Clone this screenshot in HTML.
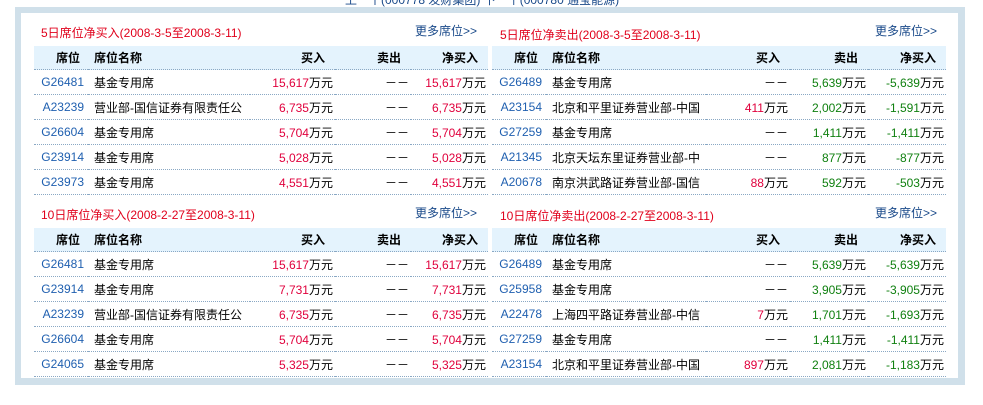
<!DOCTYPE html>
<html><head><meta charset="utf-8"><style>
body{margin:0;width:983px;height:405px;background:#fff;position:relative;overflow:hidden;font-family:"Liberation Sans","Noto Sans CJK SC",sans-serif;font-size:12px;color:#000}
.top{position:absolute;left:345px;top:-9px;color:#1a4a8a;font-size:12px;white-space:nowrap}
.outer{position:absolute;left:15px;top:7px;width:950px;height:378px;background:#d0e0ea}
.inner{position:absolute;left:21px;top:13px;width:937px;height:365px;background:#fff}
.ttl{position:absolute;color:#e0001b;white-space:nowrap}
.more{position:absolute;color:#1a4a8a;white-space:nowrap}
table{position:absolute;border-collapse:collapse;width:454px}
th{background:#e4f3fd;font-weight:bold;height:23px;border-bottom:1px dotted #8aa8c4;padding:0}
td{height:24px;border-bottom:1px dotted #8aa8c4;padding:0;white-space:nowrap}
.c1{text-align:right;padding-right:4px}
th.c1{padding-right:8px}
td.c1{color:#2060b0}
.c2{text-align:left;padding-left:6px}
.r{text-align:right;padding-right:2px}
th.r{padding-right:10px}
.red{color:#e0003c}.g{color:#108010}
</style></head><body>
<div class="top">上一个(000778 发财集团) 下一个(000780 通宝能源)</div>
<div class="outer"></div><div class="inner"></div>

<div class="ttl" style="left:41px;top:24px">5日席位净买入(2008-3-5至2008-3-11)</div>
<div class="more" style="left:415px;top:22px">更多席位&gt;&gt;</div>
<table style="left:34px;top:46px">
<colgroup><col style="width:54px"><col style="width:162px"><col style="width:85px"><col style="width:76px"><col style="width:77px"></colgroup>
<tr><th class="c1">席位</th><th class="c2">席位名称</th><th class="r">买入</th><th class="r">卖出</th><th class="r">净买入</th></tr>
<tr><td class="c1">G26481</td><td class="c2">基金专用席</td><td class="r"><span class="red">15,617</span>万元</td><td class="r">－－</td><td class="r"><span class="red">15,617</span>万元</td></tr>
<tr><td class="c1">A23239</td><td class="c2">营业部-国信证券有限责任公</td><td class="r"><span class="red">6,735</span>万元</td><td class="r">－－</td><td class="r"><span class="red">6,735</span>万元</td></tr>
<tr><td class="c1">G26604</td><td class="c2">基金专用席</td><td class="r"><span class="red">5,704</span>万元</td><td class="r">－－</td><td class="r"><span class="red">5,704</span>万元</td></tr>
<tr><td class="c1">G23914</td><td class="c2">基金专用席</td><td class="r"><span class="red">5,028</span>万元</td><td class="r">－－</td><td class="r"><span class="red">5,028</span>万元</td></tr>
<tr><td class="c1">G23973</td><td class="c2">基金专用席</td><td class="r"><span class="red">4,551</span>万元</td><td class="r">－－</td><td class="r"><span class="red">4,551</span>万元</td></tr>
</table>

<div class="ttl" style="left:500px;top:26px">5日席位净卖出(2008-3-5至2008-3-11)</div>
<div class="more" style="left:875px;top:22px">更多席位&gt;&gt;</div>
<table style="left:492px;top:46px">
<colgroup><col style="width:54px"><col style="width:160px"><col style="width:84px"><col style="width:78px"><col style="width:78px"></colgroup>
<tr><th class="c1">席位</th><th class="c2">席位名称</th><th class="r">买入</th><th class="r">卖出</th><th class="r">净买入</th></tr>
<tr><td class="c1">G26489</td><td class="c2">基金专用席</td><td class="r">－－</td><td class="r"><span class="g">5,639</span>万元</td><td class="r"><span class="g">-5,639</span>万元</td></tr>
<tr><td class="c1">A23154</td><td class="c2">北京和平里证券营业部-中国</td><td class="r"><span class="red">411</span>万元</td><td class="r"><span class="g">2,002</span>万元</td><td class="r"><span class="g">-1,591</span>万元</td></tr>
<tr><td class="c1">G27259</td><td class="c2">基金专用席</td><td class="r">－－</td><td class="r"><span class="g">1,411</span>万元</td><td class="r"><span class="g">-1,411</span>万元</td></tr>
<tr><td class="c1">A21345</td><td class="c2">北京天坛东里证券营业部-中</td><td class="r">－－</td><td class="r"><span class="g">877</span>万元</td><td class="r"><span class="g">-877</span>万元</td></tr>
<tr><td class="c1">A20678</td><td class="c2">南京洪武路证券营业部-国信</td><td class="r"><span class="red">88</span>万元</td><td class="r"><span class="g">592</span>万元</td><td class="r"><span class="g">-503</span>万元</td></tr>
</table>

<div class="ttl" style="left:41px;top:206px">10日席位净买入(2008-2-27至2008-3-11)</div>
<div class="more" style="left:415px;top:204px">更多席位&gt;&gt;</div>
<table style="left:34px;top:228px">
<colgroup><col style="width:54px"><col style="width:162px"><col style="width:85px"><col style="width:76px"><col style="width:77px"></colgroup>
<tr><th class="c1">席位</th><th class="c2">席位名称</th><th class="r">买入</th><th class="r">卖出</th><th class="r">净买入</th></tr>
<tr><td class="c1">G26481</td><td class="c2">基金专用席</td><td class="r"><span class="red">15,617</span>万元</td><td class="r">－－</td><td class="r"><span class="red">15,617</span>万元</td></tr>
<tr><td class="c1">G23914</td><td class="c2">基金专用席</td><td class="r"><span class="red">7,731</span>万元</td><td class="r">－－</td><td class="r"><span class="red">7,731</span>万元</td></tr>
<tr><td class="c1">A23239</td><td class="c2">营业部-国信证券有限责任公</td><td class="r"><span class="red">6,735</span>万元</td><td class="r">－－</td><td class="r"><span class="red">6,735</span>万元</td></tr>
<tr><td class="c1">G26604</td><td class="c2">基金专用席</td><td class="r"><span class="red">5,704</span>万元</td><td class="r">－－</td><td class="r"><span class="red">5,704</span>万元</td></tr>
<tr><td class="c1">G24065</td><td class="c2">基金专用席</td><td class="r"><span class="red">5,325</span>万元</td><td class="r">－－</td><td class="r"><span class="red">5,325</span>万元</td></tr>
</table>

<div class="ttl" style="left:500px;top:207px">10日席位净卖出(2008-2-27至2008-3-11)</div>
<div class="more" style="left:875px;top:204px">更多席位&gt;&gt;</div>
<table style="left:492px;top:228px">
<colgroup><col style="width:54px"><col style="width:160px"><col style="width:84px"><col style="width:78px"><col style="width:78px"></colgroup>
<tr><th class="c1">席位</th><th class="c2">席位名称</th><th class="r">买入</th><th class="r">卖出</th><th class="r">净买入</th></tr>
<tr><td class="c1">G26489</td><td class="c2">基金专用席</td><td class="r">－－</td><td class="r"><span class="g">5,639</span>万元</td><td class="r"><span class="g">-5,639</span>万元</td></tr>
<tr><td class="c1">G25958</td><td class="c2">基金专用席</td><td class="r">－－</td><td class="r"><span class="g">3,905</span>万元</td><td class="r"><span class="g">-3,905</span>万元</td></tr>
<tr><td class="c1">A22478</td><td class="c2">上海四平路证券营业部-中信</td><td class="r"><span class="red">7</span>万元</td><td class="r"><span class="g">1,701</span>万元</td><td class="r"><span class="g">-1,693</span>万元</td></tr>
<tr><td class="c1">G27259</td><td class="c2">基金专用席</td><td class="r">－－</td><td class="r"><span class="g">1,411</span>万元</td><td class="r"><span class="g">-1,411</span>万元</td></tr>
<tr><td class="c1">A23154</td><td class="c2">北京和平里证券营业部-中国</td><td class="r"><span class="red">897</span>万元</td><td class="r"><span class="g">2,081</span>万元</td><td class="r"><span class="g">-1,183</span>万元</td></tr>
</table>
</body></html>
